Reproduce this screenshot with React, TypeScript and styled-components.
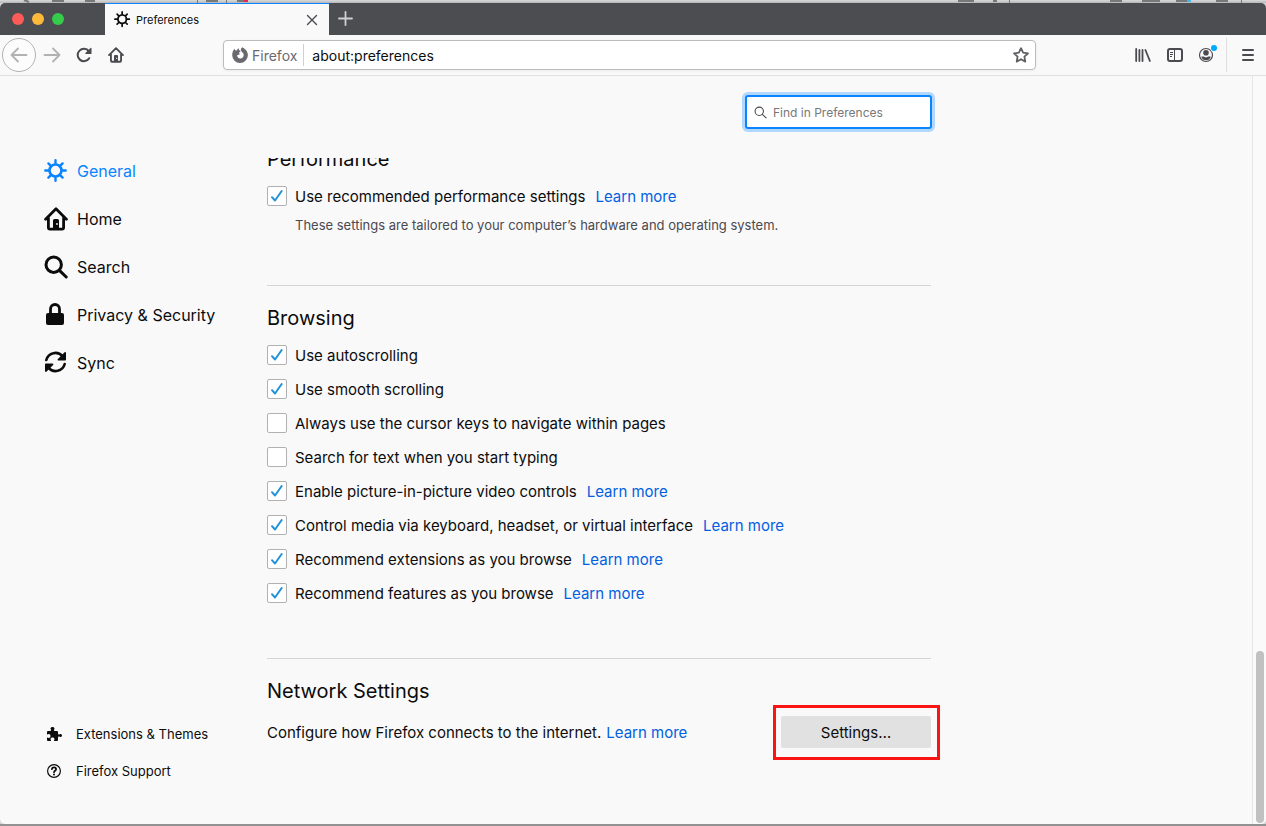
import React, { useState } from "react";
import styled, { createGlobalStyle } from "styled-components";

const GlobalStyle = createGlobalStyle`
  *, *::before, *::after { box-sizing: border-box; }
  body {
    margin: 0;
    background: #d2d3d4;
    color: #0c0c0d;
    font-family: Inter, "Liberation Sans", sans-serif;
    font-size: 15px;
  }
  button, input { font: inherit; color: inherit; }
  a { text-decoration: none; }
`;

const Desktop = styled.div`
  display: flex;
  flex-direction: column;
  height: 100vh;
`;
const DesktopEdge = styled.div`
  height: 3px;
  flex: none;
  overflow: hidden;
  background: linear-gradient(#d9dadb, #b5b6b8);
  svg { display: block; }
`;
const DesktopFloor = styled.div`
  height: 2px;
  flex: none;
  background: #929292;
`;
const BrowserWindow = styled.div`
  flex: 1;
  min-height: 0;
  display: flex;
  flex-direction: column;
  background: #f9f9fa;
  border-radius: 5px;
  overflow: hidden;
`;

const TitleBar = styled.header`
  display: flex;
  flex: none;
  height: 32px;
  background: #4b4d50;
`;
const TrafficLights = styled.div`
  display: flex;
  align-items: center;
  gap: 8px;
  width: 105px;
  padding-left: 12px;
`;
const Light = styled.button<{ $color: string }>`
  width: 12px;
  height: 12px;
  padding: 0;
  border: 0;
  border-radius: 50%;
  background: ${(p) => p.$color};
`;
const Tab = styled.div`
  display: flex;
  align-items: center;
  gap: 5px;
  width: 224px;
  padding: 0 9px 0 9px;
  background: #f9f9fa;
  border-top: 1px solid #0a84ff;
  font-size: 11px;
`;
const TabTitle = styled.span`
  flex: 1;
`;
const IconButton = styled.button<{ $size?: number; $color?: string }>`
  display: flex;
  align-items: center;
  justify-content: center;
  flex: none;
  width: ${(p) => p.$size ?? 32}px;
  height: ${(p) => p.$size ?? 32}px;
  padding: 0;
  border: 0;
  background: none;
  color: ${(p) => p.$color ?? "#4a4a4f"};
`;
const BackButton = styled(IconButton)`
  border: 1px solid #b3b3b5;
  border-radius: 50%;
  background: #fcfcfc;
`;

const Toolbar = styled.div`
  display: flex;
  align-items: center;
  flex: none;
  height: 41px;
  border-bottom: 1px solid #e0e0e1;
`;
const NavButtons = styled.div`
  display: flex;
  align-items: center;
  width: 223px;
  padding-left: 2px;
`;
const UrlBar = styled.div`
  display: flex;
  align-items: center;
  flex: 1;
  height: 30px;
  padding: 0 6px 0 8px;
  background: #fff;
  border: 1px solid #bcbcbd;
  border-radius: 4px;
  box-shadow: 0 1px 3px rgba(0, 0, 0, 0.06);
  font-size: 14px;
`;
const Identity = styled.div`
  display: flex;
  align-items: center;
  gap: 4px;
  height: 22px;
  padding-right: 6px;
  border-right: 1px solid #d0d0d1;
  color: #6a6a6e;
`;
const UrlInput = styled.input`
  flex: 1;
  min-width: 0;
  padding: 0 8px;
  border: 0;
  outline: 0;
  background: none;
`;
const ToolButtons = styled.div`
  display: flex;
  align-items: center;
  justify-content: flex-end;
  width: 230px;
  padding-right: 2px;
`;
const MenuSlot = styled.div`
  display: flex;
  align-items: center;
  height: 34px;
  margin-left: 3px;
  padding-left: 5px;
  border-left: 1px solid #dededf;
`;

const Body = styled.div`
  display: flex;
  flex: 1;
  min-height: 0;
`;
const Sidebar = styled.aside`
  display: flex;
  flex-direction: column;
  justify-content: space-between;
  flex: none;
  width: 267px;
  padding: 71px 0 35px 44px;
`;
const NavLink = styled.a<{ $active?: boolean }>`
  display: flex;
  align-items: center;
  gap: 9px;
  height: 48px;
  font-size: 16px;
  color: ${(p) => (p.$active ? "#0a84ff" : "#0c0c0d")};
`;
const FooterLink = styled.a`
  display: flex;
  align-items: center;
  gap: 14px;
  height: 37px;
  padding-left: 2px;
  font-size: 13px;
  color: #0c0c0d;
`;

const Main = styled.main`
  display: flex;
  flex-direction: column;
  flex: 1;
  min-width: 0;
`;
const SearchRow = styled.div`
  display: flex;
  justify-content: flex-end;
  align-items: flex-start;
  flex: none;
  max-width: 665px;
  height: 82px;
  padding-top: 19px;
`;
const SearchBox = styled.label`
  display: flex;
  align-items: center;
  gap: 6px;
  width: 187px;
  height: 34px;
  padding: 0 7px;
  background: #fff;
  border: 2px solid #0a84ff;
  border-radius: 3px;
  box-shadow: 0 0 0 3px #b2d7fd;
  color: #4a4a4f;
`;
const SearchInput = styled.input`
  flex: 1;
  min-width: 0;
  padding: 0;
  border: 0;
  outline: 0;
  background: none;
  font-size: 12px;
  &::placeholder { color: #777779; opacity: 1; }
`;
const ScrollPane = styled.div`
  display: flex;
  flex-direction: column;
  justify-content: flex-end;
  flex: 1;
  min-height: 0;
  max-width: 684px;
  padding: 0 20px 76px 0;
  overflow: hidden;
`;
const Section = styled.section`
  flex: none;
  padding-top: 16px;
  & + & {
    margin-top: 48px;
    border-top: 1px solid #d5d5d6;
  }
`;
const Heading = styled.h2`
  margin: 0 0 4px;
  font-size: 20px;
  font-weight: 400;
  line-height: 32px;
`;
const OptionRow = styled.div`
  display: flex;
  align-items: center;
  height: 34px;
`;
const OptionLabel = styled.label`
  display: flex;
  align-items: center;
  gap: 8px;
`;
const CheckBox = styled.span`
  display: grid;
  width: 20px;
  height: 20px;
  > * { grid-area: 1 / 1; }
  svg { pointer-events: none; visibility: hidden; }
  input:checked + svg { visibility: visible; }
`;
const CheckInput = styled.input`
  appearance: none;
  width: 20px;
  height: 20px;
  margin: 0;
  border: 1px solid #b1b1b1;
  border-radius: 2px;
  background: #fff;
`;
const LearnMore = styled.a`
  margin-left: 10px;
  color: #0060df;
`;
const Help = styled.p`
  margin: 0;
  padding-left: 28px;
  font-size: 13px;
  line-height: 24px;
  color: #4a4a4f;
`;
const NetworkRow = styled.div`
  display: flex;
  align-items: center;
  justify-content: space-between;
  padding-top: 5px;
  ${LearnMore} { margin-left: 5px; }
`;
const Highlight = styled.div`
  position: relative;
  &::after {
    content: "";
    position: absolute;
    inset: -11px -9px -12px -8px;
    border: 3px solid #fb1414;
    pointer-events: none;
  }
`;
const SettingsButton = styled.button`
  display: block;
  width: 150px;
  height: 32px;
  border: 0;
  border-radius: 2px;
  background: #e1e1e2;
`;
const ScrollTrack = styled.div`
  display: flex;
  flex-direction: column;
  justify-content: flex-end;
  flex: none;
  width: 14px;
  padding: 0 2px 1px 3px;
  border-left: 1px solid #e6e6e7;
  background: #fafafa;
`;
const ScrollThumb = styled.div`
  height: 23%;
  border-radius: 4px;
  background: #c1c1c1;
`;

const Gear = ({ size }: { size: number }) => (
  <svg width={size} height={size} viewBox="0 0 24 24" fill="none" stroke="currentColor" strokeLinecap="round">
    <circle cx="11.500" cy="11.500" r="6" strokeWidth="2.600" />
    <path strokeWidth="2.400" d="M11.500 1.300v3M11.500 18.700v3M1.300 11.500h3M18.700 11.500h3M4.400 4.400l2 2M16.600 16.600l2 2M4.400 18.600l2-2M16.600 6.400l2-2" />
  </svg>
);
const HomeIcon = ({ size }: { size: number }) => (
  <svg width={size} height={size} viewBox="0 0 24 24" fill="none" stroke="currentColor" strokeLinecap="round" strokeLinejoin="round">
    <path strokeWidth="2.800" d="M1.600 12.200 12 1.800l10.400 10.400M4.400 11v9.600c0 1 .6 1.600 1.600 1.600h12c1 0 1.600-.6 1.600-1.600V11" />
    <path fill="currentColor" stroke="none" d="M9 21.500v-8a1.500 1.500 0 0 1 1.500-1.500h3a1.500 1.500 0 0 1 1.500 1.500v8z" />
    <circle cx="13" cy="17" r="0.900" fill="#f9f9fa" stroke="none" />
  </svg>
);
const SearchIcon = ({ size, weight }: { size: number; weight: number }) => (
  <svg width={size} height={size} viewBox="0 0 24 24" fill="none" stroke="currentColor" strokeWidth={weight} strokeLinecap="round">
    <circle cx="9.700" cy="9.700" r="7.700" />
    <path d="m15.400 15.400 6.800 6.600" />
  </svg>
);
const LockIcon = () => (
  <svg width="24" height="24" viewBox="0 0 24 24">
    <path d="M6.500 11V6a4.500 4.500 0 0 1 9 0v5" fill="none" stroke="currentColor" strokeWidth="2.800" />
    <rect x="2" y="10" width="18" height="12" rx="2" fill="currentColor" />
  </svg>
);
const SyncIcon = () => (
  <svg width="24" height="24" viewBox="0 0 24 24">
    <g fill="none" stroke="currentColor" strokeWidth="2.600" strokeLinecap="round">
      <path d="M2.300 9A9.400 9.400 0 0 1 18.600 5.300" />
      <path d="M20.700 13A9.400 9.400 0 0 1 4.400 16.700" />
    </g>
    <path fill="currentColor" d="M22 1.900v6.800a.8.8 0 0 1-.8.8h-6.700c-.9 0-1.200-1-.6-1.600l6.700-6.600c.6-.5 1.400-.2 1.400.600zM1 20.100v-6.800c0-.5.300-.8.800-.8h6.700c.9 0 1.200 1 .6 1.600l-6.700 6.600c-.6.500-1.400.2-1.400-.6z" />
  </svg>
);
const PuzzleIcon = () => (
  <svg width="16" height="16" viewBox="0 0 16 16" fill="currentColor">
    <path d="M14.500 8c-.6 0-.8.500-1.500.500-.4 0-1-.2-1-1V6a1 1 0 0 0-1-1H9c-.800 0-1-.500-1-1 0-.700.500-.900.500-1.500C8.500 1.700 7.500 1 6.500 1s-2 .7-2 1.500c0 .6.500.8.500 1.500 0 .5-.2 1-1 1H2a1 1 0 0 0-1 1v2c0 .3.200.5.500.5.500 0 .7-.5 1.500-.5S4.500 8.900 4.500 10 3.800 12 3 12s-1-.5-1.500-.5c-.3 0-.5.2-.5.500v2a1 1 0 0 0 1 1h2.500c.5 0 .5-.3.500-.5 0-.6-.5-.8-.5-1.500 0-.9.900-1.500 2-1.500s2 .6 2 1.500c0 .7-.5.900-.5 1.500 0 .2.100.5.500.5H11a1 1 0 0 0 1-1v-2.500c0-.8.500-1 1-1 .7 0 .9.500 1.500.5.800 0 1.500-.7 1.500-1.500S15.300 8 14.500 8z" />
  </svg>
);
const HelpIcon = () => (
  <svg width="16" height="16" viewBox="0 0 16 16" fill="none" stroke="currentColor">
    <circle cx="8" cy="8" r="6.400" strokeWidth="1.200" />
    <path strokeWidth="1.700" strokeLinecap="round" d="M5.900 6.200C6 5 6.900 4.400 8 4.400s2.100.7 2.100 1.800c0 1.500-2.100 1.500-2.100 3" />
    <circle cx="8" cy="11.500" r="1" fill="currentColor" stroke="none" />
  </svg>
);
const Arrow = ({ flip }: { flip?: boolean }) => (
  <svg width="18" height="18" viewBox="0 0 18 18" fill="none" stroke="currentColor" strokeWidth="1.800" strokeLinecap="round" strokeLinejoin="round">
    <path d={flip ? "M1.500 9h15M10 2.500 16.500 9 10 15.500" : "M16.500 9h-15M8 2.500 1.500 9 8 15.500"} />
  </svg>
);
const ReloadIcon = () => (
  <svg width="16" height="16" viewBox="0 0 16 16">
    <path fill="none" stroke="currentColor" strokeWidth="2" strokeLinecap="round" d="M13.200 11.200A6.200 6.200 0 1 1 12.800 4.200" />
    <path fill="currentColor" d="M15.500 1.300v5.100c0 .4-.2.600-.6.600H9.800c-.5 0-.7-.6-.4-.9l5.100-5.200c.4-.4 1-.1 1 .4z" />
  </svg>
);
const FirefoxIcon = () => (
  <svg width="16" height="16" viewBox="0 0 16 16">
    <path
      fill="currentColor"
      d="M10.200.2c1.300.5 2.300 1.300 3 2.300.6.300 1.200.9 1.600 1.700.7 1.200 1.100 2.700 1.100 4.100A7.800 7.800 0 0 1 8 15.900 7.800 7.800 0 0 1 .2 8.200C.200 5.600 1 3.300 2.600 1.600c0 .7.100 1.200.4 1.700.7-.1 1.300 0 1.800.1C5.200 2.400 5.900 1.500 6.900 1c-.2.800-.1 1.400.2 2 .3.600.9.700 1.500.9-.1.900-.8 1.300-1.500 1.600-.2.800-.1 1 .8 1.300-.2.900-1.200 1.400-2.600 1.100C5 9.900 6.400 11.400 8.300 11.400c2 0 3.400-1.500 3.400-3.400 0-1.400-.7-2.300-1.700-3.100C9 4.100 8.700 3.200 8.900 2.300c.1-.8.600-1.500 1.300-2.100z"
    />
  </svg>
);
const StarIcon = () => (
  <svg width="16" height="16" viewBox="0 0 16 16" fill="none" stroke="currentColor" strokeWidth="1.800" strokeLinejoin="round">
    <path d="m8 1.200 2.100 4.500 4.900.6-3.600 3.400.9 4.900L8 12.200l-4.300 2.400.9-4.900L1 6.300l4.900-.6z" />
  </svg>
);
const LibraryIcon = () => (
  <svg width="16" height="16" viewBox="0 0 16 16" fill="none" stroke="currentColor" strokeWidth="1.800" strokeLinecap="round">
    <path d="M1.200 2v12M4.400 3v11M7.500 3v11M10.400 3l4.500 11" />
  </svg>
);
const SidebarIcon = () => (
  <svg width="16" height="16" viewBox="0 0 16 16" fill="none" stroke="currentColor">
    <rect x="1" y="2" width="14" height="12" rx="2" strokeWidth="2" />
    <path d="M7.500 2v12M3 5.500h3M3 7.500h3M3 9.500h2" strokeWidth="1" />
  </svg>
);
const AccountIcon = () => (
  <svg width="20" height="20" viewBox="0 0 20 20">
    <circle cx="9" cy="10" r="6.500" fill="none" stroke="currentColor" strokeWidth="1.200" />
    <circle cx="9" cy="7.800" r="2.800" fill="currentColor" />
    <path d="M4.400 11.400h2l2.600 1 2.600-1h2c0 2.100-2 3.800-4.600 3.800s-4.600-1.700-4.600-3.800z" fill="currentColor" />
    <circle cx="17" cy="3.500" r="3.500" fill="#f9f9fa" />
    <circle cx="17" cy="3" r="3" fill="#00a8ff" />
  </svg>
);
const MenuIcon = () => (
  <svg width="14" height="14" viewBox="0 0 14 14" stroke="currentColor" strokeWidth="2" strokeLinecap="round">
    <path d="M2 2h10M2 7h10M2 12h10" />
  </svg>
);
const CloseIcon = () => (
  <svg width="12" height="12" viewBox="0 0 12 12" stroke="currentColor" strokeWidth="1.400" strokeLinecap="round">
    <path d="m1.500 1.500 9 9M10.500 1.500l-9 9" />
  </svg>
);
const PlusIcon = () => (
  <svg width="16" height="16" viewBox="0 0 16 16" stroke="currentColor" strokeWidth="1.800" strokeLinecap="round">
    <path d="M8.500 1v13M2 7.500h13" />
  </svg>
);
const CheckMark = () => (
  <svg width="20" height="20" viewBox="0 0 20 20" fill="none" stroke="#2292d8" strokeWidth="2" strokeLinecap="round" strokeLinejoin="round">
    <path d="m5 11.200 3 3.300 6.700-9.500" />
  </svg>
);

type OptionProps = { label: string; checked?: boolean; learn?: boolean };
const Option = ({ label, checked = false, learn }: OptionProps) => {
  const [on, setOn] = useState(checked);
  return (
    <OptionRow>
      <OptionLabel>
        <CheckBox>
          <CheckInput type="checkbox" checked={on} onChange={() => setOn(!on)} />
          <CheckMark />
        </CheckBox>
        {label}
      </OptionLabel>
      {learn && <LearnMore href="#learn">Learn more</LearnMore>}
    </OptionRow>
  );
};

const browsing: OptionProps[] = [
  { label: "Use autoscrolling", checked: true },
  { label: "Use smooth scrolling", checked: true },
  { label: "Always use the cursor keys to navigate within pages" },
  { label: "Search for text when you start typing" },
  { label: "Enable picture-in-picture video controls", checked: true, learn: true },
  { label: "Control media via keyboard, headset, or virtual interface", checked: true, learn: true },
  { label: "Recommend extensions as you browse", checked: true, learn: true },
  { label: "Recommend features as you browse", checked: true, learn: true },
];

export default function App() {
  return (
    <Desktop>
      <GlobalStyle />
      <DesktopEdge>
        <svg width="1266" height="3" viewBox="0 0 1266 3" fill="none" stroke="#77787a">
          <path d="M24 0l5 2M52 1h12M85 1h10M206 1h12M237 1h8M958 1h16M993 1h4M1110 1h12M1142 1h18M1176 1h12M1216 1h12" strokeWidth="2" />
          <path d="M197.500 0v3M226.500 0v3M1009.500 0v3M1241.500 0v3" strokeWidth="1" />
          <path d="M244 1h4" stroke="#e22850" strokeWidth="2" />
          <path d="M1187 1h4" stroke="#45b5e8" strokeWidth="2" />
        </svg>
      </DesktopEdge>
      <BrowserWindow>
        <TitleBar>
          <TrafficLights>
            <Light $color="#fc5b57" aria-label="Close window" />
            <Light $color="#fdb93a" aria-label="Minimize" />
            <Light $color="#35cb4b" aria-label="Zoom" />
          </TrafficLights>
          <Tab>
            <Gear size={17} />
            <TabTitle>Preferences</TabTitle>
            <IconButton $size={16} aria-label="Close tab"><CloseIcon /></IconButton>
          </Tab>
          <IconButton $color="#d0d0d2" aria-label="New tab"><PlusIcon /></IconButton>
        </TitleBar>
        <Toolbar>
          <NavButtons>
            <BackButton $size={34} $color="#b2b2b4" aria-label="Back"><Arrow /></BackButton>
            <IconButton $color="#b2b2b4" aria-label="Forward"><Arrow flip /></IconButton>
            <IconButton aria-label="Reload"><ReloadIcon /></IconButton>
            <IconButton aria-label="Home"><HomeIcon size={16} /></IconButton>
          </NavButtons>
          <UrlBar>
            <Identity><FirefoxIcon />Firefox</Identity>
            <UrlInput aria-label="Address" defaultValue="about:preferences" />
            <IconButton $size={16} $color="#606064" aria-label="Bookmark"><StarIcon /></IconButton>
          </UrlBar>
          <ToolButtons>
            <IconButton aria-label="Library"><LibraryIcon /></IconButton>
            <IconButton aria-label="Sidebars"><SidebarIcon /></IconButton>
            <IconButton aria-label="Account"><AccountIcon /></IconButton>
            <MenuSlot>
              <IconButton aria-label="Menu"><MenuIcon /></IconButton>
            </MenuSlot>
          </ToolButtons>
        </Toolbar>
        <Body>
          <Sidebar>
            <nav>
              <NavLink href="#general" $active><Gear size={24} />General</NavLink>
              <NavLink href="#home"><HomeIcon size={24} />Home</NavLink>
              <NavLink href="#search"><SearchIcon size={24} weight={3} />Search</NavLink>
              <NavLink href="#privacy"><LockIcon />Privacy &amp; Security</NavLink>
              <NavLink href="#sync"><SyncIcon />Sync</NavLink>
            </nav>
            <div>
              <FooterLink href="#extensions"><PuzzleIcon />Extensions &amp; Themes</FooterLink>
              <FooterLink href="#support"><HelpIcon />Firefox Support</FooterLink>
            </div>
          </Sidebar>
          <Main>
            <SearchRow>
              <SearchBox>
                <SearchIcon size={13} weight={2} />
                <SearchInput type="text" placeholder="Find in Preferences" aria-label="Find in Preferences" />
              </SearchBox>
            </SearchRow>
            <ScrollPane>
              <Section>
                <Heading>Performance</Heading>
                <Option label="Use recommended performance settings" checked learn />
                <Help>These settings are tailored to your computer’s hardware and operating system.</Help>
              </Section>
              <Section>
                <Heading>Browsing</Heading>
                {browsing.map((o) => <Option key={o.label} {...o} />)}
              </Section>
              <Section>
                <Heading>Network Settings</Heading>
                <NetworkRow>
                  <span>
                    Configure how Firefox connects to the internet.
                    <LearnMore href="#network">Learn more</LearnMore>
                  </span>
                  <Highlight>
                    <SettingsButton>Settings…</SettingsButton>
                  </Highlight>
                </NetworkRow>
              </Section>
            </ScrollPane>
          </Main>
          <ScrollTrack><ScrollThumb /></ScrollTrack>
        </Body>
      </BrowserWindow>
      <DesktopFloor />
    </Desktop>
  );
}
